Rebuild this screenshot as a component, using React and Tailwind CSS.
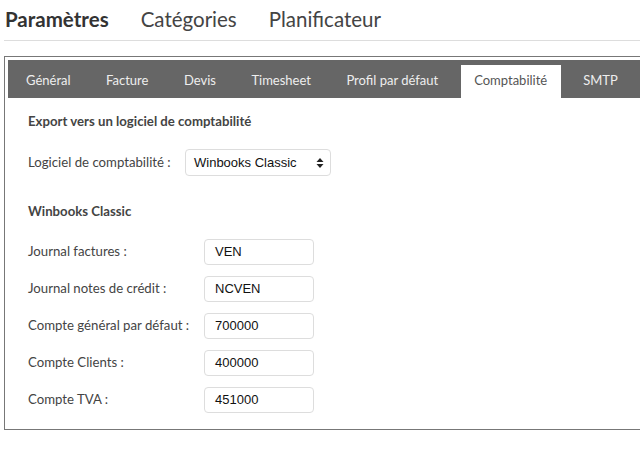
import React from "react";

const tabs = ["Général", "Facture", "Devis", "Timesheet", "Profil par défaut", "Comptabilité", "SMTP"];

const rows = [
  { label: "Journal factures :", value: "VEN" },
  { label: "Journal notes de crédit :", value: "NCVEN" },
  { label: "Compte général par défaut :", value: "700000" },
  { label: "Compte Clients :", value: "400000" },
  { label: "Compte TVA :", value: "451000" },
];

const App = () => {
  return (
    <div className="w-[640px] h-[462px] overflow-hidden bg-white font-['Lato','Noto_Sans',sans-serif]">
      <div className="ml-[4px] h-[41px] border-b border-[#dddddd] flex items-center gap-[32px] pl-[1px] pb-[1px] text-[20.5px]">
        <span className="font-bold text-[#333333]">Paramètres</span>
        <span className="text-[#444444]">Catégories</span>
        <span className="text-[#444444]">Planificateur</span>
      </div>

      <div className="ml-[4px] mt-[15px] w-[660px] border border-[#777777] pt-[3px] pl-[3px] pb-[16px]">
        <div className="h-[38px] bg-[#666666] flex items-end gap-[9.5px] pl-[5px] text-[13px]">
          {tabs.map((t) =>
            t === "Comptabilité" ? (
              <div key={t} className="h-[33px] px-[13.5px] bg-white text-[#555555] flex items-center pb-[1px]">
                {t}
              </div>
            ) : (
              <div key={t} className="h-[33px] px-[13px] text-[#eeeeee] flex items-center pb-[1px]">
                {t}
              </div>
            )
          )}
        </div>

        <div className="pl-[20px] text-[13.2px] text-[#444444]">
          <h3 className="mt-[14px] h-[18px] leading-[18px] font-bold">Export vers un logiciel de comptabilité</h3>

          <div className="mt-[19px] flex items-center">
            <label className="w-[157px]">Logiciel de comptabilité :</label>
            <div className="w-[146px] h-[27px] border border-[#dddddd] rounded-[4px] flex items-center justify-between pl-[8px] pr-[6px] font-['Liberation_Sans',Arial,sans-serif] text-[13px] text-[#111111]">
              <span>Winbooks Classic</span>
              <svg width="8" height="12" viewBox="0 0 8 12">
                <path d="M4 1 L7.5 5 H0.5 Z" fill="#222222" />
                <path d="M4 11 L7.5 7 H0.5 Z" fill="#222222" />
              </svg>
            </div>
          </div>

          <h3 className="mt-[26px] h-[18px] leading-[18px] font-bold">Winbooks Classic</h3>

          <div className="mt-[19px] flex flex-col gap-[11px]">
            {rows.map((r) => (
              <div key={r.label} className="flex items-center">
                <label className="w-[176px]">{r.label}</label>
                <div className="w-[110px] h-[26px] border border-[#dddddd] rounded-[4px] flex items-center pl-[10px] font-['Liberation_Sans',Arial,sans-serif] text-[13px] text-[#111111]">
                  {r.value}
                </div>
              </div>
            ))}
          </div>
        </div>
      </div>
    </div>
  );
};

export default App;
